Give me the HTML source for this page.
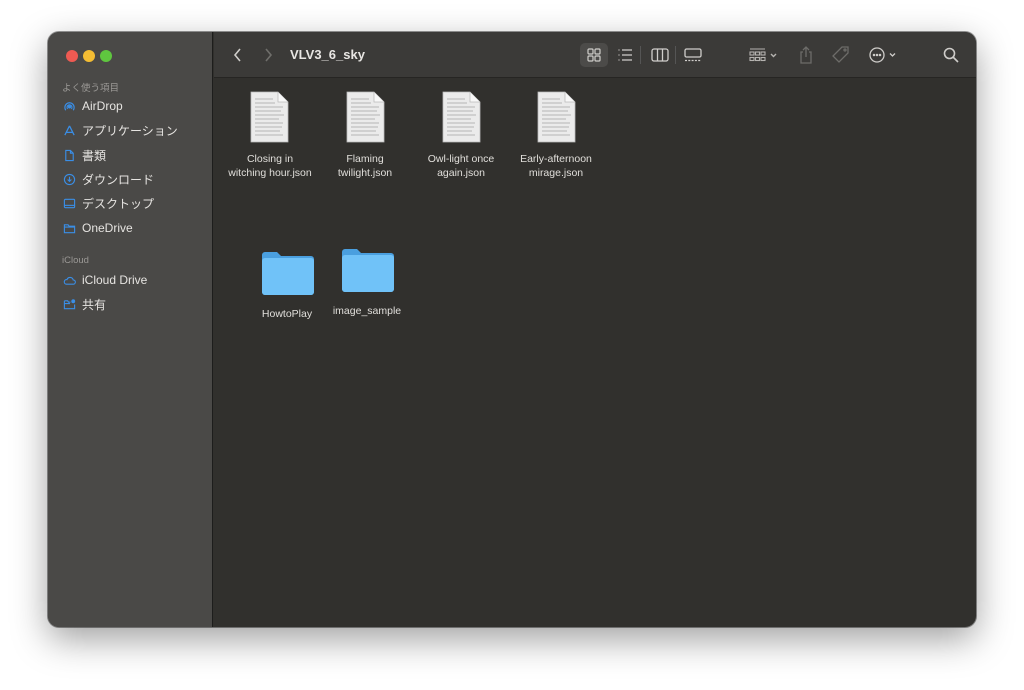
<!DOCTYPE html>
<html><head><meta charset="utf-8"><style>
*{margin:0;padding:0;box-sizing:border-box}
body{width:1024px;height:690px;background:#fff;font-family:"Liberation Sans","Noto Sans CJK JP",sans-serif;position:relative;overflow:hidden}
.win{position:absolute;left:48px;top:32px;width:928px;height:595px;border-radius:11px;overflow:hidden;background:#31302d;box-shadow:0 12px 36px rgba(0,0,0,.38),0 0 0 1px rgba(0,0,0,.4)}
.side{position:absolute;left:0;top:0;width:165px;height:100%;background:#4a4947;border-right:1px solid #1d1d1c}
.tb{position:absolute;left:166px;top:0;right:0;height:46px;background:#3b3a38;border-bottom:1px solid #262523}
.dot{position:absolute;top:18px;width:12px;height:12px;border-radius:50%}
.sec{position:absolute;left:14px;font-size:9.5px;color:#9a9895}
.it{position:absolute;left:15px;font-size:12px;color:#e6e4e1;display:flex;align-items:center;gap:6px;height:16px}
.it svg{width:13px;height:13px;flex:none}
.t{position:absolute;color:#e0deda;font-size:10.5px;text-align:center;line-height:14px;width:110px}
.doc{position:absolute;width:39px;height:52px}
.ti{position:absolute;top:13px}
</style></head><body>
<div class="win">
<div class="side">
<div class="dot" style="left:18px;background:#ee5a52"></div>
<div class="dot" style="left:35px;background:#f4bd33"></div>
<div class="dot" style="left:52px;background:#5fc63f"></div>
<div class="sec" style="top:48px">よく使う項目</div>
<div class="it" style="top:66px"><svg viewBox="0 0 14 14" fill="none" stroke="#3a8ee6" stroke-width="1.3"><path d="M3 11A5 5 0 1 1 11 11M5 9.5A2.6 2.6 0 1 1 9 9.5"/><circle cx="7" cy="7.5" r="1" fill="#3a8ee6"/></svg>AirDrop</div>
<div class="it" style="top:90px"><svg viewBox="0 0 14 14" fill="none" stroke="#3a8ee6" stroke-width="1.4"><path d="M7 2L2 12M7 2l5 10M3 9h8"/></svg>アプリケーション</div>
<div class="it" style="top:115px"><svg viewBox="0 0 14 14" fill="none" stroke="#3a8ee6" stroke-width="1.2"><path d="M3 1.5h5l3 3v8H3zM8 1.5v3h3"/></svg>書類</div>
<div class="it" style="top:139px"><svg viewBox="0 0 14 14" fill="none" stroke="#3a8ee6" stroke-width="1.2"><circle cx="7" cy="7" r="5.5"/><path d="M7 4v5M5 7l2 2 2-2"/></svg>ダウンロード</div>
<div class="it" style="top:163px"><svg viewBox="0 0 14 14" fill="none" stroke="#3a8ee6" stroke-width="1.2"><rect x="1.5" y="2.5" width="11" height="9" rx="1"/><path d="M1.5 9h11"/></svg>デスクトップ</div>
<div class="it" style="top:188px"><svg viewBox="0 0 14 14" fill="none" stroke="#3a8ee6" stroke-width="1.2"><path d="M1.5 3h4l1 1.5h6v7h-11z M1.5 5.5h11"/></svg>OneDrive</div>
<div class="sec" style="top:223px">iCloud</div>
<div class="it" style="top:240px"><svg viewBox="0 0 14 14" fill="none" stroke="#3a8ee6" stroke-width="1.2"><path d="M3.5 11h7.5a2.3 2.3 0 0 0 0-4.6A3.5 3.5 0 0 0 4.3 6 2.5 2.5 0 0 0 3.5 11z"/></svg>iCloud Drive</div>
<div class="it" style="top:264px"><svg viewBox="0 0 14 14" fill="none" stroke="#3a8ee6" stroke-width="1.2"><path d="M1.5 3h3.5l1 1.5h2M1.5 3v8.5h11V7M1.5 6h6"/><circle cx="11" cy="3.5" r="1.5" fill="#3a8ee6"/></svg>共有</div>
</div>
<div class="tb">
<svg class="ti" style="left:18px" width="12" height="20" viewBox="0 0 12 20" fill="none" stroke="#cfcdca" stroke-width="1.6"><path d="M8 4L3 10l5 6"/></svg>
<svg class="ti" style="left:48px" width="12" height="20" viewBox="0 0 12 20" fill="none" stroke="#6f6e6b" stroke-width="1.6"><path d="M4 4l5 6-5 6"/></svg>
<div style="position:absolute;left:76px;top:15px;font-size:13px;font-weight:bold;color:#e8e6e3">VLV3_6_sky</div>
<div style="position:absolute;left:366px;top:11px;width:28px;height:24px;border-radius:5px;background:#4c4b49"></div>
<svg class="ti" style="left:372px;top:15px" width="16" height="16" viewBox="0 0 16 16" fill="none" stroke="#d0cecb" stroke-width="1.2"><rect x="2" y="2" width="5" height="5" rx="1"/><rect x="9" y="2" width="5" height="5" rx="1"/><rect x="2" y="9" width="5" height="5" rx="1"/><rect x="9" y="9" width="5" height="5" rx="1"/></svg>
<svg class="ti" style="left:403px;top:15px" width="16" height="16" viewBox="0 0 16 16" fill="none" stroke="#d0cecb" stroke-width="1.3"><path d="M5 3h10M5 8h10M5 13h10M1.5 3h1M1.5 8h1M1.5 13h1"/></svg>
<div style="position:absolute;left:426px;top:14px;width:1px;height:18px;background:#555"></div>
<svg class="ti" style="left:437px;top:15px" width="18" height="16" viewBox="0 0 18 16" fill="none" stroke="#d0cecb" stroke-width="1.3"><rect x="1" y="2" width="16" height="12" rx="2"/><path d="M6.5 2v12M11.5 2v12"/></svg>
<div style="position:absolute;left:461px;top:14px;width:1px;height:18px;background:#555"></div>
<svg class="ti" style="left:470px;top:15px" width="18" height="16" viewBox="0 0 18 16" fill="none" stroke="#d0cecb" stroke-width="1.3"><rect x="1" y="2" width="16" height="8" rx="1.5"/><path d="M1 13.5h16" stroke-dasharray="2 1.3"/></svg>
<svg class="ti" style="left:535px;top:15px" width="30" height="16" viewBox="0 0 30 16" fill="none" stroke="#b5b3b0" stroke-width="1.1"><path d="M1 2h15"/><rect x="1" y="5" width="4" height="3"/><rect x="6.5" y="5" width="4" height="3"/><rect x="12" y="5" width="4" height="3"/><rect x="1" y="10.5" width="4" height="3"/><rect x="6.5" y="10.5" width="4" height="3"/><rect x="12" y="10.5" width="4" height="3"/><path d="M22 7l2.5 2.5L27 7" stroke-width="1.4"/></svg>
<svg class="ti" style="left:584px;top:13px" width="16" height="20" viewBox="0 0 16 20" fill="none" stroke="#6d6c69" stroke-width="1.3"><path d="M5 7H3v11h10V7h-2M8 2v10M5 5l3-3 3 3"/></svg>
<svg class="ti" style="left:617px;top:13px" width="20" height="20" viewBox="0 0 20 20" fill="none" stroke="#6d6c69" stroke-width="1.3"><path d="M11 2h6v6l-9 9-6-6z"/><circle cx="14" cy="5" r="1"/></svg>
<svg class="ti" style="left:654px;top:14px" width="32" height="18" viewBox="0 0 32 18" fill="none" stroke="#cfcdca" stroke-width="1.3"><circle cx="9" cy="9" r="7"/><circle cx="6" cy="9" r=".6" fill="#cfcdca"/><circle cx="9" cy="9" r=".6" fill="#cfcdca"/><circle cx="12" cy="9" r=".6" fill="#cfcdca"/><path d="M22 7.5l2.5 2.5L27 7.5"/></svg>
<svg class="ti" style="left:728px;top:14px" width="18" height="18" viewBox="0 0 18 18" fill="none" stroke="#cfcdca" stroke-width="1.6"><circle cx="7.5" cy="7.5" r="5"/><path d="M11 11l5 5"/></svg>
</div>
<svg class="doc" style="left:202px;top:59px" viewBox="0 0 39 52"><path d="M1 1h27l10 10v40H1z" fill="#ebebeb" stroke="#bbb" stroke-width=".8"/><path d="M28 1v10h10" fill="#f8f8f8" stroke="#bbb" stroke-width=".8"/><g stroke="#a5a5a5" stroke-width=".7"><path d="M5 8h18M5 12h20M5 16h28M5 20h26M5 24h29M5 28h24M5 32h28M5 36h27M5 40h25M5 44h28"/></g></svg>
<svg class="doc" style="left:298px;top:59px" viewBox="0 0 39 52"><path d="M1 1h27l10 10v40H1z" fill="#ebebeb" stroke="#bbb" stroke-width=".8"/><path d="M28 1v10h10" fill="#f8f8f8" stroke="#bbb" stroke-width=".8"/><g stroke="#a5a5a5" stroke-width=".7"><path d="M5 8h18M5 12h20M5 16h28M5 20h26M5 24h29M5 28h24M5 32h28M5 36h27M5 40h25M5 44h28"/></g></svg>
<svg class="doc" style="left:394px;top:59px" viewBox="0 0 39 52"><path d="M1 1h27l10 10v40H1z" fill="#ebebeb" stroke="#bbb" stroke-width=".8"/><path d="M28 1v10h10" fill="#f8f8f8" stroke="#bbb" stroke-width=".8"/><g stroke="#a5a5a5" stroke-width=".7"><path d="M5 8h18M5 12h20M5 16h28M5 20h26M5 24h29M5 28h24M5 32h28M5 36h27M5 40h25M5 44h28"/></g></svg>
<svg class="doc" style="left:489px;top:59px" viewBox="0 0 39 52"><path d="M1 1h27l10 10v40H1z" fill="#ebebeb" stroke="#bbb" stroke-width=".8"/><path d="M28 1v10h10" fill="#f8f8f8" stroke="#bbb" stroke-width=".8"/><g stroke="#a5a5a5" stroke-width=".7"><path d="M5 8h18M5 12h20M5 16h28M5 20h26M5 24h29M5 28h24M5 32h28M5 36h27M5 40h25M5 44h28"/></g></svg>
<div class="t" style="left:167px;top:120px">Closing in<br>witching hour.json</div>
<div class="t" style="left:262px;top:120px">Flaming<br>twilight.json</div>
<div class="t" style="left:358px;top:120px">Owl-light once<br>again.json</div>
<div class="t" style="left:453px;top:120px">Early-afternoon<br>mirage.json</div>
<svg style="position:absolute;left:214px;top:219px" width="52" height="44" viewBox="0 0 52 44"><path d="M0 4a3 3 0 0 1 3-3h12l4 4h30a3 3 0 0 1 3 3v33a3 3 0 0 1-3 3H3a3 3 0 0 1-3-3z" fill="#4a9fdf"/><path d="M0 10a3 3 0 0 1 3-3h46a3 3 0 0 1 3 3v31a3 3 0 0 1-3 3H3a3 3 0 0 1-3-3z" fill="#70c2f8"/></svg>
<svg style="position:absolute;left:294px;top:216px" width="52" height="44" viewBox="0 0 52 44"><path d="M0 4a3 3 0 0 1 3-3h12l4 4h30a3 3 0 0 1 3 3v33a3 3 0 0 1-3 3H3a3 3 0 0 1-3-3z" fill="#4a9fdf"/><path d="M0 10a3 3 0 0 1 3-3h46a3 3 0 0 1 3 3v31a3 3 0 0 1-3 3H3a3 3 0 0 1-3-3z" fill="#70c2f8"/></svg>
<div class="t" style="left:184px;top:275px">HowtoPlay</div>
<div class="t" style="left:264px;top:272px">image_sample</div>
</div>
</body></html>
